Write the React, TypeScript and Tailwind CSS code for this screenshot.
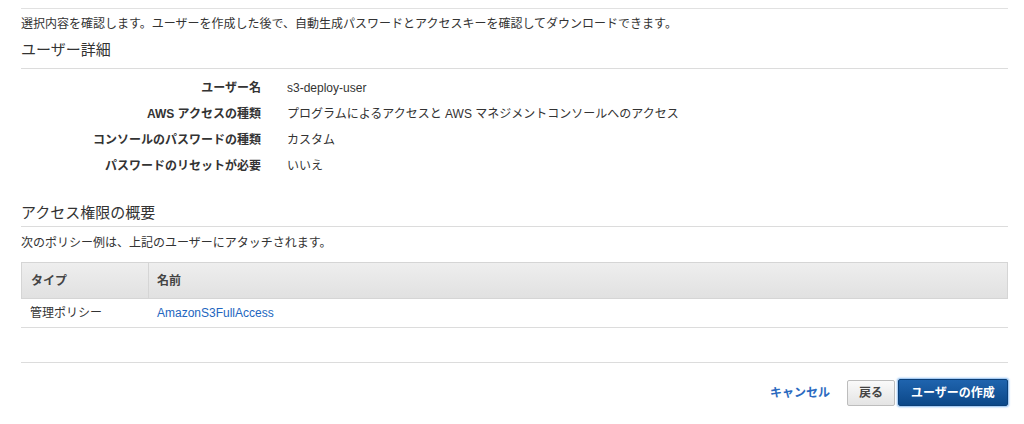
import React from "react";

const font = { fontFamily: '"Liberation Sans", "Noto Sans CJK JP", sans-serif' };

const rows: [string, string][] = [
  ["ユーザー名", "s3-deploy-user"],
  ["AWS アクセスの種類", "プログラムによるアクセスと AWS マネジメントコンソールへのアクセス"],
  ["コンソールのパスワードの種類", "カスタム"],
  ["パスワードのリセットが必要", "いいえ"],
];

export default function App() {
  return (
    <div className="w-[1024px] h-[424px] bg-white overflow-hidden text-[12px] text-[#444]" style={font}>
      <div className="pl-[21px] pr-[16px] pt-[8px]">
        <div className="border-t border-[#e1e1e1]" />
        <p className="mt-[6px] leading-[18px] text-[#333]">
          選択内容を確認します。ユーザーを作成した後で、自動生成パスワードとアクセスキーを確認してダウンロードできます。
        </p>
        <h2 className="mt-[7px] text-[15px] leading-[20px] text-[#333] pb-[8px] border-b border-[#dcdcdc]">
          ユーザー詳細
        </h2>
        <div className="pt-[6px]">
          {rows.map(([k, v]) => (
            <div key={k} className="flex h-[26px] items-center">
              <div className="w-[240px] text-right font-bold text-[#333]">{k}</div>
              <div className="ml-[26px] text-[#333]">{v}</div>
            </div>
          ))}
        </div>
        <h2 className="mt-[24px] text-[15px] leading-[20px] text-[#333] pb-[3px] border-b border-[#dcdcdc]">
          アクセス権限の概要
        </h2>
        <p className="mt-[7px] leading-[18px] text-[#333]">次のポリシー例は、上記のユーザーにアタッチされます。</p>
        <div className="mt-[10px]">
          <div className="flex h-[37px] border border-[#d5d5d5] bg-gradient-to-b from-[#eeeeee] to-[#e1e1e1] font-bold text-[#444]">
            <div className="w-[127px] flex items-center pl-[9px] border-r border-[#d5d5d5]">タイプ</div>
            <div className="flex items-center pl-[8px]">名前</div>
          </div>
          <div className="flex h-[29px] border-b border-[#dcdcdc] items-center text-[#333]">
            <div className="w-[128px] pl-[9px]">管理ポリシー</div>
            <div className="pl-[8px] text-[#2266c0]">AmazonS3FullAccess</div>
          </div>
        </div>
        <div className="mt-[34px] border-t border-[#dcdcdc]" />
        <div className="mt-[16px] flex items-center justify-end">
          <span className="font-bold text-[#2b6ac0] mr-[17px]">キャンセル</span>
          <button className="h-[26px] w-[48px] rounded-[2px] border border-[#bdbdbd] bg-gradient-to-b from-[#fafafa] to-[#e4e4e4] font-bold text-[#444] mr-[3px]">
            戻る
          </button>
          <button className="h-[27px] w-[110px] rounded-[2px] border border-[#0b3f78] bg-gradient-to-b from-[#1f64ae] to-[#0c4889] font-bold text-white shadow-[0_0_2px_1px_#8bbcf0]">
            ユーザーの作成
          </button>
        </div>
      </div>
    </div>
  );
}
